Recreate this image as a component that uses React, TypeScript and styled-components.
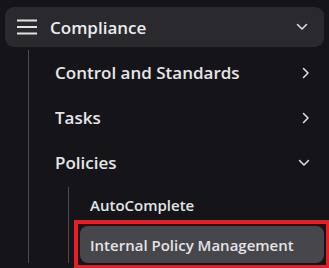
import React from "react";
import styled, { createGlobalStyle } from "styled-components";

const Global = createGlobalStyle`
  html, body {
    margin: 0;
    padding: 0;
    background: #151519;
    overflow: hidden;
  }
  body {
    font-family: "Open Sans", "Noto Sans", sans-serif;
    color: #e6e6e8;
  }
`;

const Sidebar = styled.nav`
  width: 329px;
  height: 268px;
  box-sizing: border-box;
  padding: 7px 5px 0 5px;
`;

const Header = styled.div`
  display: flex;
  align-items: center;
  height: 40px;
  padding: 0 16px 0 12px;
  background: #2a2a2e;
  border-radius: 9px;
`;

const HeaderTitle = styled.span`
  flex: 1;
  margin-left: 13px;
  font-size: 17px;
  font-weight: 600;
  color: #ececee;
`;

const Tree = styled.ul<{ $indent: number; $top: number }>`
  list-style: none;
  margin: ${(p) => p.$top}px 0 0 ${(p) => p.$indent}px;
  padding: 0;
  border-left: 1px solid #4a4a50;
`;

const Row = styled.div`
  display: flex;
  align-items: center;
  height: 45px;
  padding: 0 14px 0 26px;
  font-size: 17px;
  font-weight: 600;
  color: #e6e6e8;
`;

const RowLabel = styled.span`
  flex: 1;
`;

const SubTree = styled.ul`
  list-style: none;
  margin: 2px 0 6px 39px;
  padding: 0 0 0 11px;
  border-left: 1px solid #4a4a50;
  display: flex;
  flex-direction: column;
  gap: 3px;
`;

const SubItem = styled.li<{ $active?: boolean }>`
  position: relative;
  display: flex;
  align-items: center;
  height: ${(p) => (p.$active ? 37 : 36)}px;
  padding: 0 10px;
  border-radius: 8px;
  font-size: 15px;
  font-weight: 600;
  color: #e4e4e6;
  background: ${(p) => (p.$active ? "#46464b" : "transparent")};

  ${(p) =>
    p.$active &&
    `
    &::after {
      content: "";
      position: absolute;
      left: -6px;
      top: -6px;
      right: -6px;
      bottom: -6px;
      border: 4px solid #ec1c24;
      pointer-events: none;
    }
  `}
`;

const Hamburger = () => (
  <svg width="20" height="16" viewBox="0 0 20 16" fill="none">
    <path d="M0 1.5h20M0 8h20M0 14.5h20" stroke="#e2e2e4" strokeWidth="2" />
  </svg>
);

const ChevronDown = () => (
  <svg width="12" height="8" viewBox="0 0 12 8" fill="none">
    <path d="M1.5 1.5l4.5 4.5 4.5-4.5" stroke="#e2e2e4" strokeWidth="1.5" strokeLinecap="round" strokeLinejoin="round" />
  </svg>
);

const ChevronRight = () => (
  <svg width="8" height="12" viewBox="0 0 8 12" fill="none">
    <path d="M1.5 1.5l4.5 4.5-4.5 4.5" stroke="#e2e2e4" strokeWidth="1.5" strokeLinecap="round" strokeLinejoin="round" />
  </svg>
);

export default function App() {
  return (
    <>
      <Global />
      <Sidebar>
        <Header>
          <Hamburger />
          <HeaderTitle>Compliance</HeaderTitle>
          <ChevronDown />
        </Header>
        <Tree $indent={23} $top={3}>
          <li>
            <Row>
              <RowLabel>Control and Standards</RowLabel>
              <ChevronRight />
            </Row>
          </li>
          <li>
            <Row>
              <RowLabel>Tasks</RowLabel>
              <ChevronRight />
            </Row>
          </li>
          <li>
            <Row>
              <RowLabel>Policies</RowLabel>
              <ChevronDown />
            </Row>
            <SubTree>
              <SubItem>AutoComplete</SubItem>
              <SubItem $active>Internal Policy Management</SubItem>
            </SubTree>
          </li>
        </Tree>
      </Sidebar>
    </>
  );
}
